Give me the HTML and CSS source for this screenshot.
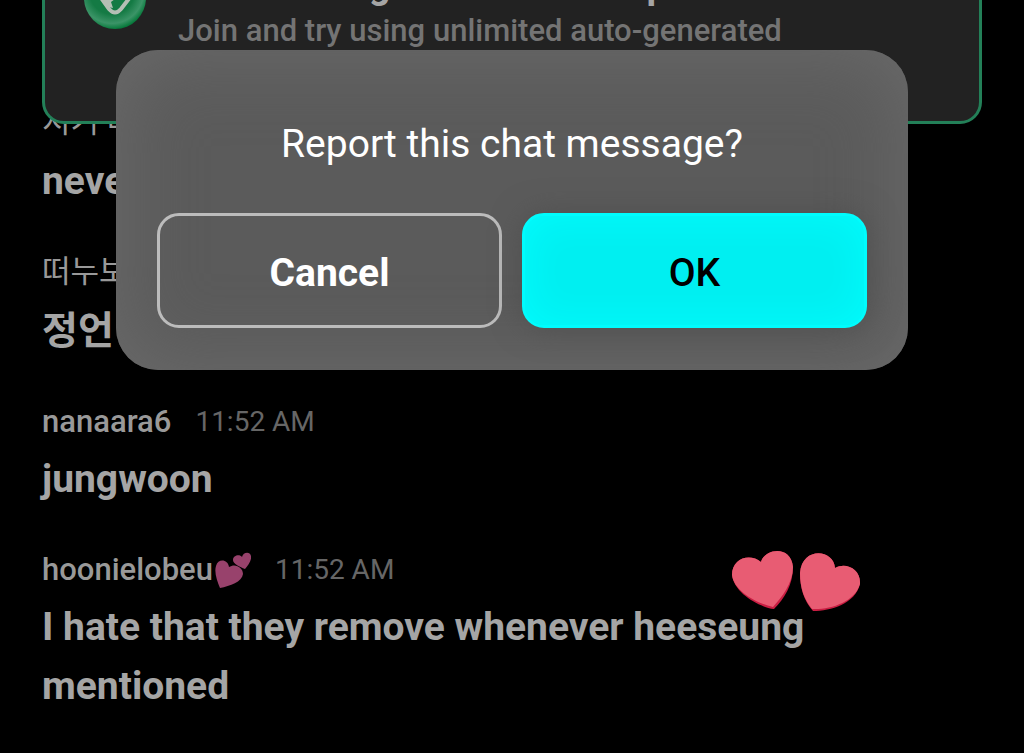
FILE: index.html
```html
<!DOCTYPE html>
<html lang="en">
<head>
    <meta charset="UTF-8">
    <meta name="viewport" content="width=device-width, initial-scale=1.0">
    <title>Live chat</title>
    <link rel="stylesheet" href="styles.css">
</head>
<body>
    <main class="chat">
        <article class="message" lang="ko">
            <div class="message-head"><span class="name">지기 다</span></div>
            <p class="text">never</p>
        </article>
        <article class="message" lang="ko">
            <div class="message-head"><span class="name">떠누보</span></div>
            <p class="text">정언</p>
        </article>
        <article class="message">
            <div class="message-head">
                <span class="name">nanaara6</span>
                <time class="time">11:52 AM</time>
            </div>
            <p class="text">jungwoon</p>
        </article>
        <article class="message">
            <div class="message-head">
                <span class="name">hoonielobeu<svg class="name-hearts" viewBox="0 0 36 36" aria-hidden="true">
                    <path d="M5 36C2 29-1 20 1 14C3 6 13 7 14 15C20 11 28 15 28 22C27 30 15 34 5 36Z"/>
                    <path d="M30 17C25 15 18 12 18 8C18 3 25 2 27 5C28 0 35-1 36 4C37 8 33 14 30 17Z"/>
                </svg></span>
                <time class="time">11:52 AM</time>
            </div>
            <p class="text">I hate that they remove whenever heeseung mentioned</p>
        </article>
    </main>

    <aside class="banner">
        <svg class="banner-icon" viewBox="0 0 64 64" aria-hidden="true">
            <defs>
                <radialGradient id="badge" cx="0.45" cy="0.4" r="0.6">
                    <stop offset="0.6" stop-color="#147a44"/>
                    <stop offset="0.85" stop-color="#3b9467"/>
                    <stop offset="1" stop-color="#087a3c"/>
                </radialGradient>
            </defs>
            <circle cx="32" cy="31" r="31" fill="url(#badge)"/>
            <path d="M16 28L26 42Q32 49 38 42L48 29" fill="none" stroke="#b5bfb5" stroke-width="4"/>
            <path d="M17 29H36L28 35L30 41L25 40Z" fill="#b5bfb5"/>
        </svg>
        <div class="banner-body">
            <h2 class="banner-title">Weverse Digital Membership</h2>
            <p class="banner-text">Join and try using unlimited auto-generated</p>
        </div>
    </aside>

    <svg class="reaction" viewBox="0 0 130 64" aria-hidden="true">
        <path class="heart-shade" d="M43 59C28 57 3 43 1 25C1 8 19 3 30 12C33-1 60-6 62 17C62 35 53 49 43 59Z"/>
        <path class="heart" d="M42 57C28 54 3 42 1 25C1 8 19 3 30 12C33-1 60-6 62 17C62 33 51 47 42 57Z"/>
        <path class="heart-shade" d="M82 61C73 51 69 38 69 23C71-4 103-1 104 18C115 12 130 19 129 34C124 54 100 61 82 61Z"/>
        <path class="heart" d="M81 59C73 49 69 38 69 23C71-4 103-1 104 18C115 12 130 19 129 34C124 52 99 60 81 59Z"/>
    </svg>

    <div class="dialog" role="dialog" aria-labelledby="dialog-title">
        <h1 class="dialog-title" id="dialog-title">Report this chat message?</h1>
        <div class="dialog-actions">
            <button class="btn btn-cancel" type="button">Cancel</button>
            <button class="btn btn-ok" type="button">OK</button>
        </div>
    </div>
</body>
</html>
```
FILE: styles.css
```css
:root {
    --bg: #000;
    --surface: #222;
    --green: #238058;
    --text: #a5a5a5;
    --name: #999;
    --muted: #666;
    --space: 42px;
}

* {
    margin: 0;
    padding: 0;
    box-sizing: border-box;
}

body {
    position: relative;
    min-height: 100vh;
    overflow: hidden;
    background: var(--bg);
    font-family: Roboto, "Noto Sans CJK KR", sans-serif;
    color: var(--text);
}

/* Chat */
.chat {
    display: flex;
    flex-direction: column;
    justify-content: flex-end;
    gap: 39px;
    min-height: 100vh;
    padding: 0 var(--space) 37px;
}

.message-head {
    display: flex;
    align-items: center;
    gap: 24px;
    height: 44px;
    margin-bottom: 6px;
    line-height: 40px;
}

.name {
    display: flex;
    align-items: center;
    font-size: 31px;
    font-weight: 500;
    color: var(--name);
}

/* Hangul names sit a little higher and lighter */
.message:lang(ko) .message-head {
    align-items: flex-start;
    height: 46px;
    line-height: 44px;
}

.message:lang(ko) .name {
    font-weight: 400;
}

.name-hearts {
    width: 36px;
    height: 36px;
    margin-left: 2px;
    fill: #98426c;
}

.time {
    font-size: 28px;
    color: var(--muted);
}

.text {
    font-size: 39px;
    font-weight: 700;
    line-height: 59px;
}

/* Membership banner pinned over the chat */
.banner {
    position: absolute;
    top: -76px;
    left: var(--space);
    right: var(--space);
    display: flex;
    gap: 31px;
    height: 200px;
    padding: 40px 38px;
    background: var(--surface);
    border: 3px solid var(--green);
    border-radius: 22px;
}

.banner-icon {
    flex: none;
    width: 64px;
    height: 64px;
}

.banner-title {
    font-size: 38px;
    line-height: 36px;
}

.banner-text {
    margin-top: 6px;
    font-size: 31px;
    font-weight: 500;
    line-height: 44px;
    color: #747474;
}

/* Floating hearts */
.reaction {
    position: absolute;
    top: 550px;
    right: 163px;
    width: 130px;
    height: 64px;
}

.heart {
    fill: #e85c73;
}

.heart-shade {
    fill: #c91e43;
}

/* Report dialog */
.dialog {
    position: absolute;
    top: 50px;
    left: 116px;
    right: 116px;
    padding: 66px 41px 42px;
    background: #5b5b5b;
    border-radius: 42px;
    box-shadow: inset 0 0 80px #6b6b6b;
    text-align: center;
}

.dialog-title {
    margin-bottom: 41px;
    font-size: 39px;
    font-weight: 400;
    line-height: 56px;
    color: #fff;
}

.dialog-actions {
    display: flex;
    gap: 20px;
}

.btn {
    flex: 1;
    width: 0;
    height: 115px;
    padding-top: 4px;
    border: 3px solid transparent;
    border-radius: 22px;
    font-family: inherit;
    font-size: 39px;
    cursor: pointer;
}

.btn-cancel {
    background: transparent;
    border-color: #bcbcbc;
    font-weight: 700;
    color: #fff;
}

.btn-ok {
    background: #00eff1;
    border-color: #00fcfd;
    box-shadow: inset 0 0 40px #00fcfd, 0 0 30px #505050;
    font-weight: 500;
    color: #000;
}
```
